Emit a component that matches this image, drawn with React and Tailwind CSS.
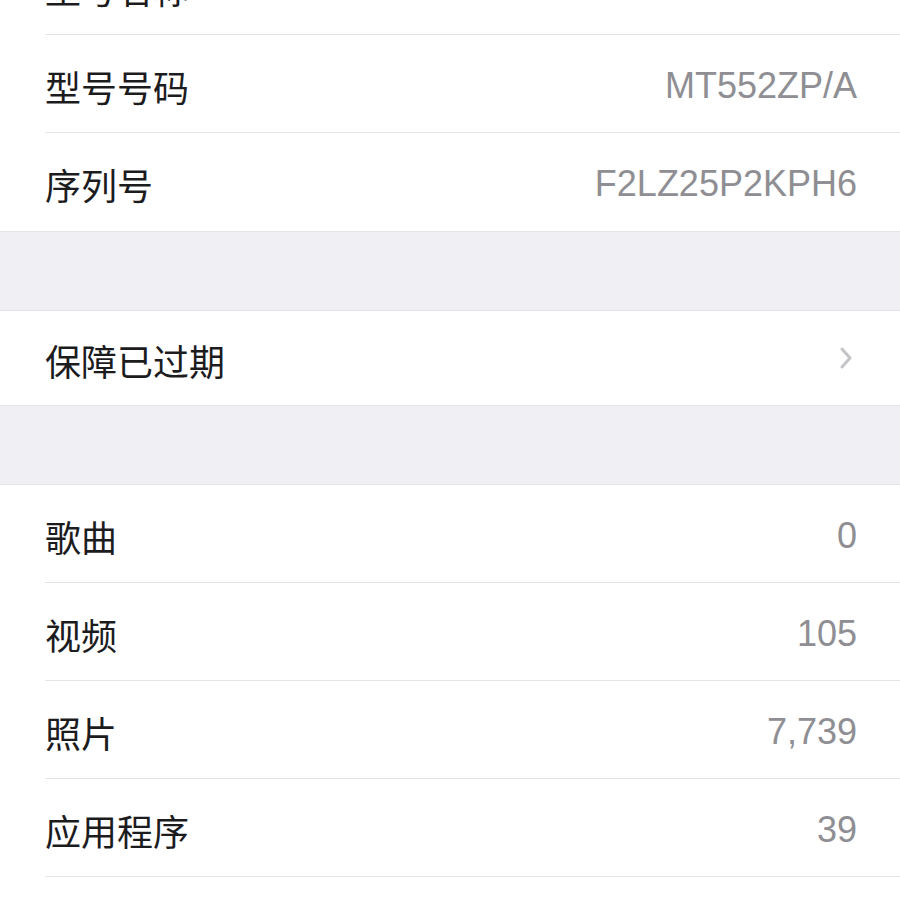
import React from "react";

const labelFont = { fontFamily: '"Noto Sans CJK SC", "Noto Sans", sans-serif' };

const Row = ({ label, value, chevron, last, h = "h-[98px]" }) => (
  <div className={`${h} flex items-stretch bg-white`}>
    <div
      className={`flex-1 ml-[45px] pr-[43px] flex items-center justify-between ${
        last ? "" : "border-b border-[#e3e3e8]"
      }`}
    >
      <span className="text-[36px] leading-none text-[#1c1c1e] pt-[4px]" style={labelFont}>
        {label}
      </span>
      {value && (
        <span className="text-[36px] leading-none text-[#8e8e93] font-['Liberation_Sans',Arial,sans-serif] pt-[4px]">
          {value}
        </span>
      )}
      {chevron && (
        <svg width="14" height="24" viewBox="0 0 14 24" fill="none" className="mr-[4px]">
          <path d="M3 3l8 9-8 9" stroke="#c4c4c8" strokeWidth="3" strokeLinecap="round" strokeLinejoin="round" />
        </svg>
      )}
    </div>
  </div>
);

export default function App() {
  return (
    <div className="w-[900px] h-[900px] overflow-hidden bg-[#efeff4]">
      {/* device section, scrolled so the first row is cut off */}
      <div className="-mt-[63px] bg-white border-b border-[#e3e3e8]">
        <Row label="型号名称" value="iPhone XS Max" />
        <Row label="型号号码" value="MT552ZP/A" />
        <Row label="序列号" value="F2LZ25P2KPH6" last />
      </div>

      <div className="h-[78px]" />

      <div className="bg-white border-y border-[#e3e3e8]">
        <Row label="保障已过期" chevron last h="h-[94px]" />
      </div>

      <div className="h-[78px]" />

      <div className="bg-white border-t border-[#e3e3e8]">
        <Row label="歌曲" value="0" />
        <Row label="视频" value="105" />
        <Row label="照片" value="7,739" />
        <Row label="应用程序" value="39" />
        <Row label="总容量" value="64 GB" />
      </div>
    </div>
  );
}
